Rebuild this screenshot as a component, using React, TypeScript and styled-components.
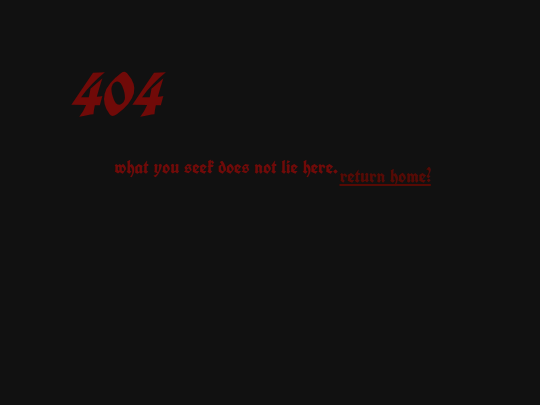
import React from "react";
import styled, { createGlobalStyle } from "styled-components";

const GlobalStyle = createGlobalStyle`
  body {
    margin: 0;
    background: #111111;
    color: #700a08;
    font-family: "UnifrakturCook", "Liberation Serif", serif;
    font-weight: 700;
  }
`;

const Page = styled.main`
  padding: 60px 68px;
`;

const Title = styled.h1`
  margin: 0;
  font-size: 62px;
  line-height: 68px;
  font-style: italic;
`;

const Message = styled.div`
  display: flex;
  flex-wrap: wrap;
  align-items: flex-start;
  margin: 27px 0 0 46px;
  font-size: 19px;
  line-height: 24px;
`;

const Text = styled.p`
  margin: 0;
`;

const HomeLink = styled.a`
  margin: 9px 0 0 2px;
  color: #560a04;
  text-decoration: underline;
  text-decoration-thickness: 2px;
  text-decoration-skip-ink: none;
  text-underline-offset: 1px;
`;

export default function App() {
  return (
    <>
      <GlobalStyle />
      <Page>
        <Title>404</Title>
        <Message>
          <Text>what you seek does not lie here.</Text>
          <HomeLink href="/">return home?</HomeLink>
        </Message>
      </Page>
    </>
  );
}
